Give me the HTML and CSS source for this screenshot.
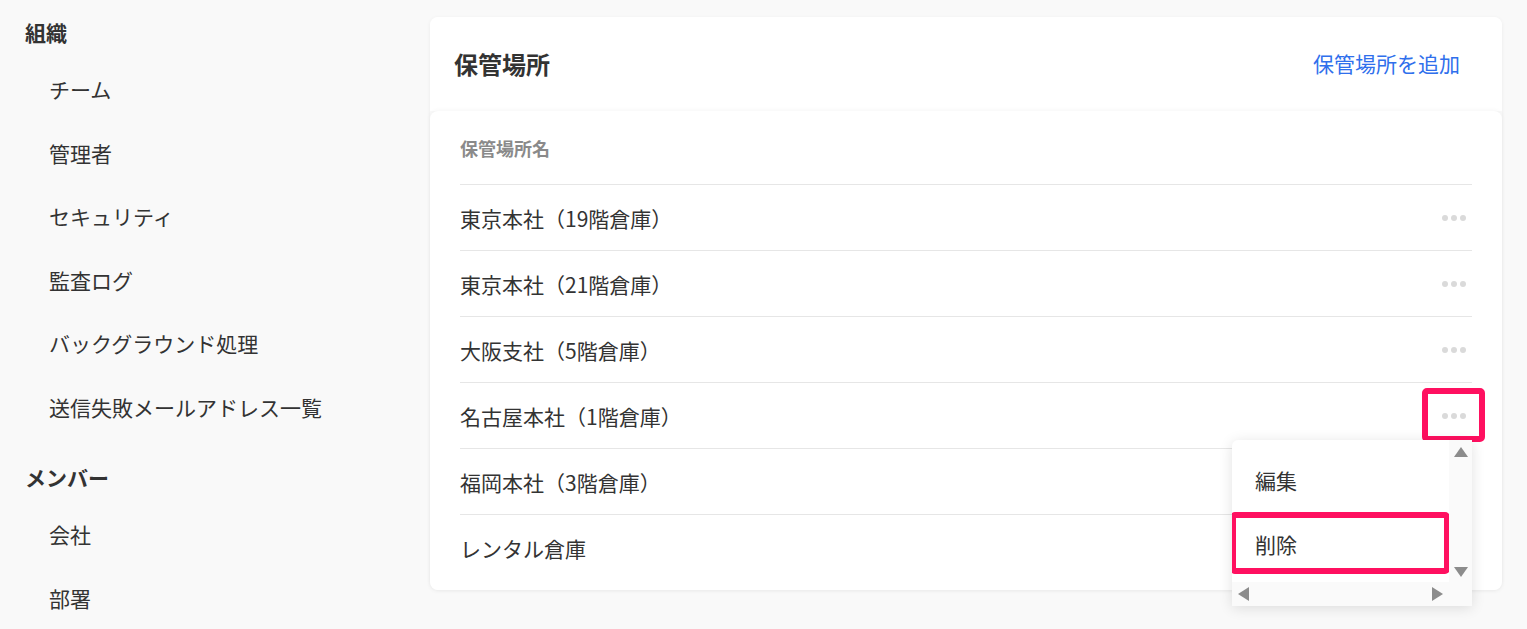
FILE: index.html
```html
<!DOCTYPE html>
<html lang="ja">
<head>
    <meta charset="UTF-8">
    <meta name="viewport" content="width=device-width, initial-scale=1.0">
    <title>保管場所</title>
    <link rel="stylesheet" href="styles.css">
</head>
<body>
    <div class="layout">
        <!-- Settings navigation -->
        <nav class="sidebar">
            <div class="nav-group">
                <div class="nav-heading">組織</div>
                <a class="nav-item" href="#">チーム</a>
                <a class="nav-item" href="#">管理者</a>
                <a class="nav-item" href="#">セキュリティ</a>
                <a class="nav-item" href="#">監査ログ</a>
                <a class="nav-item" href="#">バックグラウンド処理</a>
                <a class="nav-item" href="#">送信失敗メールアドレス一覧</a>
            </div>
            <div class="nav-group">
                <div class="nav-heading">メンバー</div>
                <a class="nav-item" href="#">会社</a>
                <a class="nav-item" href="#">部署</a>
            </div>
        </nav>

        <main class="main">
            <section class="panel">
                <header class="panel-header">
                    <h1 class="panel-title">保管場所</h1>
                    <a class="panel-action" href="#">保管場所を追加</a>
                </header>

                <div class="panel-body">
                    <div class="table-head">保管場所名</div>
                    <ul class="location-list">
                        <li class="location-row">
                            <span class="location-name">東京本社（19階倉庫）</span>
                            <span class="actions"><span class="more"><i></i><i></i><i></i></span></span>
                        </li>
                        <li class="location-row">
                            <span class="location-name">東京本社（21階倉庫）</span>
                            <span class="actions"><span class="more"><i></i><i></i><i></i></span></span>
                        </li>
                        <li class="location-row">
                            <span class="location-name">大阪支社（5階倉庫）</span>
                            <span class="actions"><span class="more"><i></i><i></i><i></i></span></span>
                        </li>
                        <li class="location-row">
                            <span class="location-name">名古屋本社（1階倉庫）</span>
                            <span class="actions">
                                <span class="more is-marked"><i></i><i></i><i></i></span>
                                <!-- open row menu -->
                                <div class="menu">
                                    <ul class="menu-list">
                                        <li class="menu-item">編集</li>
                                        <li class="menu-item is-marked">削除</li>
                                    </ul>
                                    <div class="scroll-v"><span class="arrow-up"></span><span class="arrow-down"></span></div>
                                    <div class="scroll-h"><span class="arrow-left"></span><span class="arrow-right"></span></div>
                                    <div class="scroll-corner"></div>
                                </div>
                            </span>
                        </li>
                        <li class="location-row">
                            <span class="location-name">福岡本社（3階倉庫）</span>
                            <span class="actions"><span class="more"><i></i><i></i><i></i></span></span>
                        </li>
                        <li class="location-row">
                            <span class="location-name">レンタル倉庫</span>
                            <span class="actions"><span class="more"><i></i><i></i><i></i></span></span>
                        </li>
                    </ul>
                </div>
            </section>
        </main>
    </div>
</body>
</html>
```

FILE: styles.css
```css
body {
    margin: 0;
    overflow: hidden;
    background-color: #f9f9f9;
    color: #333;
    font-family: "Noto Sans CJK JP", "Noto Sans", sans-serif;
}

.layout {
    display: flex;
    align-items: flex-start;
}

/* Sidebar */
.sidebar {
    flex: 0 0 430px;
    box-sizing: border-box;
    padding: 12px 0 0 25px;
}
.nav-group + .nav-group {
    margin-top: 18px;
}
.nav-heading {
    font-size: 21px;
    font-weight: bold;
    line-height: 40px;
    margin-bottom: 6px;
}
.nav-item {
    display: block;
    padding-left: 24px;
    font-size: 21px;
    line-height: 63.5px;
    color: #333;
    text-decoration: none;
}

/* Main panel */
.main {
    flex: 1;
    padding: 17px 25px 0 0;
}
.panel {
    border-radius: 8px;
    box-shadow: 0 1px 4px rgba(0, 0, 0, 0.06);
}
.panel-header {
    display: flex;
    align-items: center;
    justify-content: space-between;
    box-sizing: border-box;
    height: 94px;
    padding: 0 42px 2px 24px;
    background-color: #fff;
    border-radius: 8px 8px 0 0;
}
.panel-title {
    margin: 0;
    font-size: 24px;
    font-weight: bold;
}
.panel-action {
    font-size: 21px;
    color: #2f6fec;
    text-decoration: none;
}
.panel-body {
    padding: 0 30px 10px;
    background-color: #fff;
    border-radius: 8px;
    box-shadow: 0 -1px 4px rgba(0, 0, 0, 0.04);
}
.table-head {
    padding: 23px 0 22px;
    font-size: 18px;
    font-weight: bold;
    line-height: 28px;
    color: #8a8a8a;
    border-bottom: 1px solid #e6e6e6;
}
.location-list {
    margin: 0;
    padding: 0;
    list-style: none;
}
.location-row {
    display: flex;
    align-items: center;
    justify-content: space-between;
    height: 65px;
    padding-right: 6px;
    font-size: 21px;
    border-bottom: 1px solid #e6e6e6;
}
.location-row:last-child {
    border-bottom: none;
}

/* Row actions */
.actions {
    position: relative;
    display: flex;
}
.more {
    position: relative;
    display: inline-flex;
    gap: 3px;
}
.more i {
    width: 6px;
    height: 6px;
    border-radius: 50%;
    background-color: #dadada;
}
.more.is-marked::after {
    content: '';
    position: absolute;
    top: -25px;
    bottom: -23px;
    left: -20px;
    right: -19px;
    border: 6px solid #ff1060;
    border-radius: 5px;
    z-index: 10;
}

/* Dropdown menu */
.menu {
    position: absolute;
    top: 27px;
    right: -6px;
    z-index: 10;
    display: grid;
    grid-template-columns: 217px 23px;
    grid-template-rows: 142px 24px;
    background-color: #fff;
    border-radius: 6px 0 0 0;
    box-shadow: 0 2px 14px rgba(0, 0, 0, 0.12);
}
.menu-list {
    margin: 0;
    padding: 8px 0 0;
    list-style: none;
    overflow: hidden;
}
.menu-item {
    position: relative;
    padding-left: 23px;
    font-size: 21px;
    line-height: 64px;
}
.menu-item.is-marked::after {
    content: '';
    position: absolute;
    top: 0;
    bottom: 2px;
    left: -2px;
    right: -1px;
    border: 6px solid #ff1060;
    border-radius: 5px;
}
.scroll-v,
.scroll-h,
.scroll-corner {
    background-color: #fafafa;
}
.scroll-v {
    display: flex;
    flex-direction: column;
    align-items: center;
    justify-content: space-between;
    padding: 7px 0 5px;
}
.scroll-h {
    display: flex;
    align-items: center;
    justify-content: space-between;
    padding: 0 6px;
}
.arrow-up,
.arrow-down {
    width: 0;
    height: 0;
    border-left: 7.5px solid transparent;
    border-right: 7.5px solid transparent;
}
.arrow-up { border-bottom: 10px solid #8c8c8c; }
.arrow-down { border-top: 10px solid #8c8c8c; }
.arrow-left,
.arrow-right {
    width: 0;
    height: 0;
    border-top: 7px solid transparent;
    border-bottom: 7px solid transparent;
}
.arrow-left { border-right: 11px solid #8c8c8c; }
.arrow-right { border-left: 11px solid #8c8c8c; }
```
